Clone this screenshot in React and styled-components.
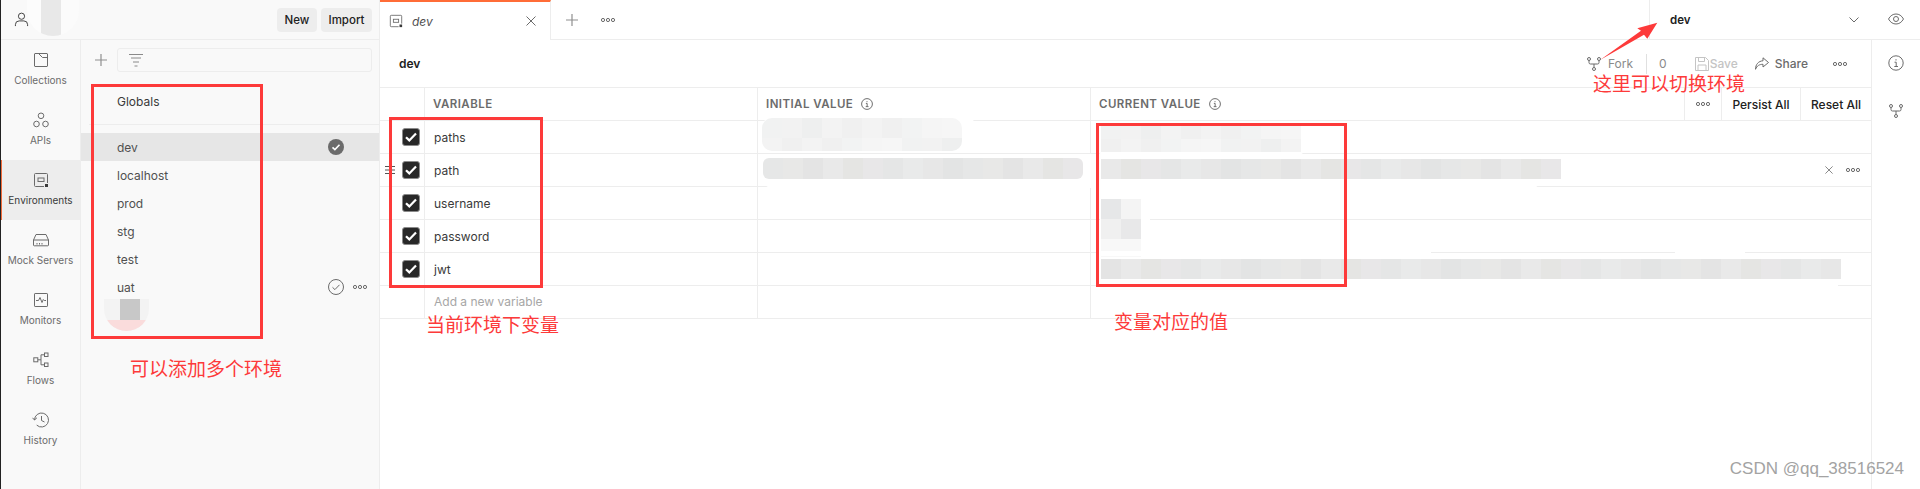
import React from 'react';
import styled, { createGlobalStyle } from 'styled-components';

const Global = createGlobalStyle`
  html, body { margin: 0; padding: 0; background: #fff; }
  body { font-family: Inter, "Noto Sans CJK SC", sans-serif; font-size: 12px; color: #3a3a3a; overflow: hidden; }
  * { box-sizing: border-box; }
`;

const Page = styled.div`
  position: relative; width: 1920px; height: 489px; display: flex; overflow: hidden;
`;
const LeftPane = styled.div`
  width: 380px; height: 100%; display: flex; flex-direction: column; background: #f9f9f9;
  border-left: 1px solid #222; border-right: 1px solid #ededed; flex: none;
`;
const TopBar = styled.div`
  height: 40px; flex: none; display: flex; align-items: center; border-bottom: 1px solid #ededed;
  padding: 0 7px 0 13px; position: relative;
`;
const TopButtons = styled.div`margin-left: auto; display: flex; gap: 4px;`;
const TopButton = styled.div`
  height: 24px; width: ${p => p.$w}px; text-align: center; line-height: 24px; border-radius: 4px; background: #ededed;
  font-weight: 500; font-size: 11.5px; color: #212121;
`;
const LeftBody = styled.div`flex: 1; display: flex; min-height: 0;`;
const Rail = styled.div`width: 80px; flex: none; border-right: 1px solid #ededed; display: flex; flex-direction: column;`;
const RailItem = styled.div`
  height: 60px; display: flex; flex-direction: column; align-items: center; padding-top: 12px; gap: 5px;
  font-size: 10px; line-height: 14px; color: ${p => p.$active ? '#3a3a3a' : '#6b6b6b'};
  background: ${p => p.$active ? '#ededed' : 'transparent'};
  box-shadow: ${p => p.$active ? 'inset 1px 0 0 #f26b3a' : 'none'};
  svg { display: block; }
`;
const Side = styled.div`flex: 1; display: flex; flex-direction: column; min-width: 0;`;
const SideTools = styled.div`height: 32px; margin-top: 4px; display: flex; align-items: center; padding: 0 7px 0 14px; flex: none;`;
const FilterBox = styled.div`
  margin-left: 10px; flex: 1; height: 24px; border: 1px solid #ededed; border-radius: 3px; display: flex; align-items: center; padding-left: 11px;
`;
const Globals = styled.div`
  margin: 14px 0 0 8px; height: 35px; border-bottom: 1px solid #ededed; padding: 0 0 0 28px;
  font-size: 12px; line-height: 24px; color: #3a3a3a;
`;
const EnvList = styled.div`margin-top: 8px; display: flex; flex-direction: column;`;
const EnvRow = styled.div`
  height: 28px; display: flex; align-items: center; padding: 0 12px 0 36px; gap: 8px; color: #505050; font-size: 12px;
  background: ${p => p.$selected ? '#e6e6e6' : 'transparent'};
`;
const EnvName = styled.span`flex: 1;`;
const EnvIcons = styled.span`display: flex; align-items: center; gap: 9px; margin-right: ${p => p.$mr || 0}px; svg { display: block; }`;

const Main = styled.div`flex: 1; min-width: 0; display: flex; flex-direction: column;`;
const TabBar = styled.div`height: 40px; flex: none; display: flex; border-bottom: 1px solid #ededed;`;
const Tab = styled.div`
  width: 171px; height: 40px; background: #fff; border-top: 2px solid #ff6c37; border-right: 1px solid #ededed;
  display: flex; align-items: center; padding: 0 14px 0 9px; gap: 9px;
  font-style: italic; font-size: 12px; color: #505050;
`;
const TabTitle = styled.span`flex: 1;`;
const TabTools = styled.div`display: flex; align-items: center; gap: 23px; padding: 0 0 0 15px; flex: 1;`;
const EnvSelect = styled.div`
  margin-left: auto; width: 222px; border-left: 1px solid #ededed; display: flex; align-items: center;
  padding: 0 12px 0 20px; font-weight: 600; font-size: 11.5px; color: #212121; justify-content: space-between;
`;
const EyeCell = styled.div`width: 49px; display: flex; align-items: center; justify-content: center; flex: none; padding-bottom: 2px;`;
const Content = styled.div`flex: 1; display: flex; min-height: 0;`;
const Work = styled.div`flex: 1; min-width: 0; display: flex; flex-direction: column;`;
const RightRail = styled.div`
  width: 49px; flex: none; border-left: 1px solid #ededed; display: flex; flex-direction: column; align-items: center; padding-top: 15px; gap: 33px;
`;
const TitleRow = styled.div`height: 48px; flex: none; display: flex; align-items: center; padding: 0 24px 0 19px; border-bottom: 1px solid #ededed;`;
const Title = styled.div`font-weight: 600; font-size: 12px; color: #212121; flex: 1;`;
const Action = styled.span`
  display: flex; align-items: center; gap: ${p => p.$gap || 4}px; font-size: 12px; font-weight: ${p => p.$w || 400};
  color: ${p => p.$c || '#6b6b6b'}; margin-right: ${p => p.$mr || 0}px;
  svg { display: block; }
`;
const Sep = styled.span`width: 1px; height: 20px; background: #e0e0e0; margin: 0 12px 0 13px;`;

const Grid = '44px 333px 333px 1fr';
const Row = styled.div`
  display: grid; grid-template-columns: ${Grid}; height: 33px; border-bottom: 1px solid #ededed; flex: none;
`;
const HeadRow = styled(Row)``;
const Cell = styled.div`
  border-left: ${p => p.$first ? 'none' : '1px solid #ededed'};
  display: flex; align-items: center; padding-left: ${p => p.$first ? 0 : 9}px; min-width: 0; position: relative;
  justify-content: ${p => p.$first ? 'center' : 'flex-start'};
  font-size: 12px; color: #3a3a3a;
`;
const HeadCell = styled(Cell)`
  font-size: 11.5px; font-weight: 600; color: #6b6b6b; letter-spacing: .45px; gap: 8px; padding-bottom: 1px; padding-left: 8px;
`;
const Placeholder = styled.span`color: #a6a6a6; font-size: 12px; padding-bottom: 2px;`;
const HeadActions = styled.div`position: absolute; right: 0; top: 0; bottom: 0; display: flex;`;
const HeadAction = styled.div`
  border-left: 1px solid #ededed; width: ${p => p.$w}px; display: flex; align-items: center; justify-content: center;
  font-weight: 500; font-size: 12px; color: #212121; letter-spacing: 0;
`;
const Check = styled.span`
  width: 18px; height: 18px; border-radius: 3px; background: #282828; border: 1px solid #8a8a8a; display: flex; align-items: center; justify-content: center;
  margin-left: 18px;
`;
const DragHandle = styled.span`position: absolute; left: 5px; top: 11px; svg { display: block; }`;
const RowTools = styled.span`position: absolute; right: 11px; top: 0; bottom: 0; display: flex; align-items: center; gap: 13px; svg { display: block; }`;

const Smear = styled.div`position: absolute; background: #fff; border-radius: ${p => p.$r ?? 10}px; left: ${p => p.$x}px; top: ${p => p.$y}px; width: ${p => p.$w}px; height: ${p => p.$h}px;`;
const Mosaic = styled.div`
  position: absolute; left: ${p => p.$x}px; top: ${p => p.$y}px; display: flex; flex-direction: column; border-radius: ${p => p.$r || 0}px; overflow: hidden;
`;
const MosaicRow = styled.div`display: flex; height: ${p => p.$h}px;`;
const Tile = styled.span`width: 20px; height: 100%; flex: none;`;

const RedBox = styled.div`
  position: absolute; left: ${p => p.$x}px; top: ${p => p.$y}px; width: ${p => p.$w}px; height: ${p => p.$h}px; border: 3px solid #fd3a3a;
`;
const Note = styled.div`
  position: absolute; left: ${p => p.$x}px; top: ${p => p.$y}px; color: #fd3a3a; font-family: "Noto Sans CJK SC", sans-serif;
  font-size: 19px; line-height: 24px; white-space: nowrap;
`;
const Watermark = styled.div`
  position: absolute; right: 16px; top: 459px; font-family: "Liberation Sans", sans-serif; font-size: 17px; color: #a3a3a3; line-height: 20px;
`;
const ArrowSvg = styled.svg`position: absolute; left: 1596px; top: 20px;`;
const AvatarTop = styled.div`position: absolute; left: 27px; top: 0; width: 52px; height: 36px; display: flex; border-radius: 0 0 26px 26px; overflow: hidden;`;
const AvatarPart = styled.span`height: 100%; width: ${p => p.$w}px; background: ${p => p.$c};`;
const Blob = styled.div`position: absolute; left: 104px; top: 299px; width: 45px; height: 32px; border-radius: 0 0 24px 24px; overflow: hidden; background: #f3f3f3;`;
const BlobBottom = styled.div`position: absolute; left: 0; right: 0; bottom: 0; height: 11px; background: #fadcdc;`;
const BlobSquare = styled.div`position: absolute; left: 16px; top: 0; width: 20px; height: 21px; background: #c8c8c8;`;

const S = { fill: 'none', stroke: '#6b6b6b', strokeWidth: 1 };
const Dots = ({ c = '#6b6b6b' }) => (
  <svg width="14" height="6" viewBox="0 0 14 6" fill="none" stroke={c}>
    <circle cx="2" cy="3" r="1.6" /><circle cx="7" cy="3" r="1.6" /><circle cx="12" cy="3" r="1.6" />
  </svg>
);
const EnvIcon = ({ size = 16 }) => (
  <svg width={size} height={size} viewBox="0 0 16 16">
    <path d="M11 14.5H2.5a1 1 0 0 1-1-1v-11a1 1 0 0 1 1-1h11a1 1 0 0 1 1 1V11" {...S} />
    <rect x="5" y="6" width="6" height="3.5" {...S} />
    <rect x="12" y="12" width="3" height="3" fill="#3a3a3a" />
  </svg>
);
const ForkIcon = ({ c = '#6b6b6b' }) => (
  <svg width="14" height="14" viewBox="0 0 14 14" fill="none" stroke={c}>
    <circle cx="2" cy="2" r="1.5" /><circle cx="12" cy="2" r="1.5" /><circle cx="7" cy="12" r="1.5" />
    <path d="M2 3.500V5.500a1.500 1.500 0 0 0 1.500 1.500h7a1.500 1.500 0 0 0 1.500-1.500V3.500M7 7v3.500" />
  </svg>
);
const InfoIcon = ({ size = 12 }) => (
  <svg width={size} height={size} viewBox="0 0 16 16" fill="none" stroke="#6b6b6b" strokeWidth={size < 14 ? 1.3 : 1}>
    <circle cx="8" cy="8" r="7.2" />
    <path d="M6.5 7.2H8.2V11.5M6.3 11.5H10M8 4.2v1.3" />
  </svg>
);
const CheckGlyph = () => (
  <svg width="12" height="10" viewBox="0 0 12 10" fill="none" stroke="#fff" strokeWidth="2.2">
    <path d="M1 5.2L4.3 8.4L11 1.4" />
  </svg>
);
const CrossIcon = ({ size = 10, c = '#6b6b6b' }) => (
  <svg width={size} height={size} viewBox="0 0 10 10" fill="none" stroke={c}><path d="M.5.5l9 9M9.5.5l-9 9" /></svg>
);
const PlusIcon = ({ size = 12, c = '#8f8f8f' }) => (
  <svg width={size} height={size} viewBox="0 0 12 12" fill="none" stroke={c} strokeWidth="1.2"><path d="M6 0v12M0 6h12" /></svg>
);

const railItems = [
  ['Collections', <svg key="c" width="16" height="16" viewBox="0 0 16 16"><path d="M2 1.5h12a.6.6 0 0 1 .5.5v12a.6.6 0 0 1-.5.5H2a.6.6 0 0 1-.5-.5V2a.6.6 0 0 1 .5-.5zM5.500 1.500L9.500 5.500H14.500" {...S} /></svg>],
  ['APIs', <svg key="a" width="16" height="16" viewBox="0 0 16 16" {...S}><circle cx="8" cy="3.8" r="2.8" /><circle cx="3.5" cy="12" r="2.8" /><circle cx="12.5" cy="12" r="2.8" /></svg>],
  ['Environments', <EnvIcon key="e" />],
  ['Mock Servers', <svg key="m" width="16" height="16" viewBox="0 0 16 16" {...S}><path d="M3 2.5h10L15.5 8v5a.8.8 0 0 1-.8.8H1.3a.8.8 0 0 1-.8-.8V8zM.5 8h15M4 11v1.5M6.5 11v1.5M9 11v1.5" /></svg>],
  ['Monitors', <svg key="o" width="16" height="16" viewBox="0 0 16 16" {...S}><rect x="1.5" y="1.5" width="13" height="13" rx=".6" /><path d="M3 8.5h2.500l1.500-3 2 5 1.300-3 1 1H13" /></svg>],
  ['Flows', <svg key="f" width="16" height="16" viewBox="0 0 16 16" {...S}><rect x=".8" y="5.800" width="4" height="4" /><rect x="11.500" y="1" width="3.500" height="3.500" /><rect x="11.500" y="11" width="3.500" height="3.500" /><path d="M4.800 7.800H8V2.800h3.500M8 7.800v5h3.500" /></svg>],
  ['History', <svg key="h" width="17" height="16" viewBox="0 0 17 16" {...S}><path d="M2.500 8a7 7 0 1 1 2.200 5.100" /><path d="M.5 5.800L2.500 8l2.400-2.200M9.500 4v4.500l3 1.500" /></svg>],
];
const envs = ['dev', 'localhost', 'prod', 'stg', 'test', 'uat'];
const vars = ['paths', 'path', 'username', 'password', 'jwt'];

const palette = ['#e6e7e7', '#e8e8e7', '#e4e4e4', '#e9e9e9', '#e5e5e3', '#e8e7e8', '#e5e6e6', '#e9eaea', '#e7e7e7', '#e3e4e4'];
const light = ['#f1f2f2', '#f2f2f2', '#eeefef', '#f3f3f3', '#f0f0f0', '#f3f3f3', '#f0f0f0', '#f2f3f3', '#f5f5f5', '#f6f6f6'];
const Blocks = ({ n, h, tones, off = 0 }) => (
  <MosaicRow $h={h}>
    {Array.from({ length: n }, (_, i) => <Tile key={i} style={{ background: tones[(i + off) % tones.length] }} />)}
  </MosaicRow>
);

export default function App() {
  return (
    <Page>
      <Global />
      <LeftPane>
        <TopBar>
          <svg width="15" height="15" viewBox="0 0 16 16" {...S} stroke="#3a3a3a"><circle cx="8" cy="4.500" r="3.300" /><path d="M1.500 15v-1.500a4 4 0 0 1 4-4h5a4 4 0 0 1 4 4V15" /></svg>
          <TopButtons><TopButton $w={40}>New</TopButton><TopButton $w={51}>Import</TopButton></TopButtons>
        </TopBar>
        <LeftBody>
          <Rail>
            {railItems.map(([label, icon]) => (
              <RailItem key={label} $active={label === 'Environments'}>{icon}<span>{label}</span></RailItem>
            ))}
          </Rail>
          <Side>
            <SideTools>
              <PlusIcon />
              <FilterBox>
                <svg width="14" height="13" viewBox="0 0 14 13" fill="none" stroke="#8a8a8a"><path d="M0 .5h14M2 4h10M4 8h6M5.500 12h3" /></svg>
              </FilterBox>
            </SideTools>
            <Globals>Globals</Globals>
            <EnvList>
              {envs.map((e) => (
                <EnvRow key={e} $selected={e === 'dev'}>
                  <EnvName>{e}</EnvName>
                  {e === 'dev' && (
                    <EnvIcons $mr={23}>
                      <svg width="16" height="16" viewBox="0 0 16 16"><circle cx="8" cy="8" r="8" fill="#6b6b6b" /><path d="M4.500 8.300l2.400 2.300 4.600-4.800" fill="none" stroke="#fff" strokeWidth="1.600" /></svg>
                    </EnvIcons>
                  )}
                  {e === 'uat' && (
                    <EnvIcons>
                      <svg width="16" height="16" viewBox="0 0 16 16" {...S}><circle cx="8" cy="8" r="7.500" /><path d="M4.500 8.300l2.400 2.300 4.600-4.800" /></svg>
                      <Dots />
                    </EnvIcons>
                  )}
                </EnvRow>
              ))}
            </EnvList>
          </Side>
        </LeftBody>
      </LeftPane>
      <Main>
        <TabBar>
          <Tab>
            <EnvIcon size={14} />
            <TabTitle>dev</TabTitle>
            <CrossIcon />
          </Tab>
          <TabTools><PlusIcon /><Dots /></TabTools>
          <EnvSelect>
            <span>dev</span>
            <svg width="10" height="6" viewBox="0 0 10 6" fill="none" stroke="#6b6b6b"><path d="M.5.500L5 5 9.500.500" /></svg>
          </EnvSelect>
          <EyeCell>
            <svg width="16" height="12" viewBox="0 0 16 12" fill="none" stroke="#6b6b6b"><path d="M.5 6C2.500 2.500 5 1 8 1s5.500 1.500 7.500 5c-2 3.500-4.500 5-7.500 5S2.500 9.500.5 6z" /><circle cx="8" cy="6" r="2.500" /></svg>
          </EyeCell>
        </TabBar>
        <Content>
          <Work>
            <TitleRow>
              <Title>dev</Title>
              <Action $gap={7} $c="#8a8a8a"><ForkIcon />Fork</Action>
              <Sep />
              <Action $mr={28} $c="#8a8a8a">0</Action>
              <Action $gap={1} $c="#c4c4c4" $w={500} $mr={17}>
                <svg width="14" height="14" viewBox="0 0 14 14" fill="none" stroke="#c4c4c4"><path d="M.5.500h10l3 3v10H.500zM3.500.500v4h6v-4M3 13.500V8h8v5.500" /></svg>
                Save
              </Action>
              <Action $gap={6} $w={500} $mr={25}>
                <svg width="14" height="13" viewBox="0 0 14 13" fill="none" stroke="#6b6b6b"><path d="M8 .8L13.500 5.500 8 10V7.300C4.500 7.300 2 8.500.5 12.300.5 7.500 3.500 4 8 3.800z" /></svg>
                Share
              </Action>
              <Dots />
            </TitleRow>
            <HeadRow>
              <HeadCell $first />
              <HeadCell>VARIABLE</HeadCell>
              <HeadCell>INITIAL VALUE <InfoIcon /></HeadCell>
              <HeadCell>CURRENT VALUE <InfoIcon />
                <HeadActions>
                  <HeadAction $w={37}><Dots /></HeadAction>
                  <HeadAction $w={79}>Persist All</HeadAction>
                  <HeadAction $w={71}>Reset All</HeadAction>
                </HeadActions>
              </HeadCell>
            </HeadRow>
            {vars.map((v) => (
              <Row key={v}>
                <Cell $first>
                  {v === 'path' && (
                    <DragHandle>
                      <svg width="10" height="10" viewBox="0 0 10 10" fill="none" stroke="#555"><path d="M0 1.500h10M0 5h10M0 8.500h10M5 0v1M5 9v1" /></svg>
                    </DragHandle>
                  )}
                  <Check><CheckGlyph /></Check>
                </Cell>
                <Cell>{v}</Cell>
                <Cell />
                <Cell>
                  {v === 'path' && (
                    <RowTools><CrossIcon size={8} /><Dots /></RowTools>
                  )}
                </Cell>
              </Row>
            ))}
            <Row>
              <Cell $first />
              <Cell><Placeholder>Add a new variable</Placeholder></Cell>
              <Cell />
              <Cell />
            </Row>
          </Work>
          <RightRail>
            <InfoIcon size={16} />
            <ForkIcon />
          </RightRail>
        </Content>
      </Main>

      <AvatarTop><AvatarPart $w={14} $c="#fcfcfc" /><AvatarPart $w={20} $c="#e8e8e8" /><AvatarPart $w={18} $c="#fbfbfb" /></AvatarTop>
      <Blob><BlobBottom /><BlobSquare /></Blob>

      <Smear $x={762} $y={117} $w={214} $h={36} />
      <Mosaic $x={762} $y={118} $r={10}>
        <Blocks n={10} h={20} tones={light} />
        <Blocks n={10} h={13} tones={light} off={3} />
      </Mosaic>
      <Smear $x={762} $y={154} $w={780} $h={34} />
      <Mosaic $x={763} $y={158} $r={6}>
        <Blocks n={16} h={21} tones={palette} />
      </Mosaic>
      <Smear $x={1096} $y={122} $w={210} $h={34} />
      <Mosaic $x={1101} $y={125}>
        <Blocks n={10} h={14} tones={light} />
        <Blocks n={10} h={13} tones={light} off={4} />
      </Mosaic>
      <Mosaic $x={1101} $y={159}>
        <Blocks n={23} h={20} tones={palette} off={3} />
      </Mosaic>
      <Smear $x={1100} $y={188} $w={50} $h={62} />
      <Mosaic $x={1101} $y={199}>
        <MosaicRow $h={20}><Tile style={{ background: '#e6e7e8' }} /><Tile style={{ background: '#f4f4f4' }} /></MosaicRow>
        <MosaicRow $h={20}><Tile style={{ background: '#f0f0f0' }} /><Tile style={{ background: '#e8e8e9' }} /></MosaicRow>
        <MosaicRow $h={18}><Tile style={{ background: '#f8f8f8' }} /><Tile style={{ background: '#f8f8f8' }} /></MosaicRow>
      </Mosaic>
      <Smear $x={1096} $y={251} $w={335} $h={5} $r={0} />
      <Smear $x={1675} $y={251} $w={70} $h={5} $r={0} />
      <Smear $x={1096} $y={284} $w={742} $h={5} $r={0} />
      <Mosaic $x={1101} $y={259}>
        <Blocks n={37} h={20} tones={palette} off={2} />
      </Mosaic>

      <RedBox $x={91} $y={84} $w={172} $h={255} />
      <RedBox $x={389} $y={117} $w={154} $h={171} />
      <RedBox $x={1096} $y={123} $w={251} $h={164} />
      <ArrowSvg width="70" height="50" viewBox="0 0 70 50">
        <path d="M4 40L45 10.700L41.300 8.300L61.300 2.700L51.300 18.700L48 14.700Z" fill="#fd3a3a" />
      </ArrowSvg>
      <Note $x={1593} $y={71}>这里可以切换环境</Note>
      <Note $x={426} $y={312}>当前环境下变量</Note>
      <Note $x={1114} $y={309}>变量对应的值</Note>
      <Note $x={130} $y={356}>可以添加多个环境</Note>
      <Watermark>CSDN @qq_38516524</Watermark>
    </Page>
  );
}
